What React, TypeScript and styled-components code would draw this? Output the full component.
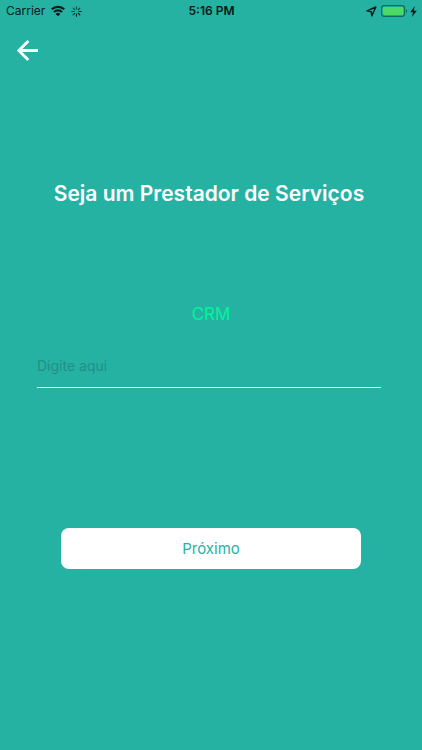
import React from "react";
import styled, { createGlobalStyle } from "styled-components";

const Global = createGlobalStyle`
  * { box-sizing: border-box; }
  body { margin: 0; background: #26b2a3; font-family: Inter, "Liberation Sans", sans-serif; }
`;
const Screen = styled.div`
  min-height: 100vh;
  display: flex;
  flex-direction: column;
`;
const StatusBar = styled.div`
  display: grid;
  grid-template-columns: 1fr auto 1fr;
  align-items: center;
  height: 22px;
  padding: 0 5px 0 6px;
  font-size: 12px;
  line-height: 20px;
  color: #041a17;
`;
const StatusGroup = styled.div<{ $end?: boolean }>`
  display: flex;
  align-items: center;
  gap: ${(p) => (p.$end ? 4 : 6)}px;
  justify-content: ${(p) => (p.$end ? "flex-end" : "flex-start")};
  svg { display: block; flex: none; }
`;
const PowerGroup = styled.div`
  display: flex;
  align-items: center;
  gap: 2px;
`;
const Clock = styled.time`
  font-weight: 600;
`;
const Header = styled.header`
  display: flex;
  padding: 16px;
`;
const BackButton = styled.button`
  display: flex;
  padding: 0;
  border: 0;
  background: none;
  color: #fff;
  cursor: pointer;
`;
const Form = styled.form`
  display: flex;
  flex-direction: column;
  padding: 102px 41px 0 37px;
`;
const Title = styled.h1`
  margin: 0;
  font-size: 21px;
  line-height: 28px;
  font-weight: 600;
  text-align: center;
  color: #fff;
  white-space: nowrap;
`;
const Label = styled.label`
  margin: 94px -4px 0 0;
  font-size: 17px;
  line-height: 24px;
  text-align: center;
  color: #00f59b;
`;
const Field = styled.input`
  width: 100%;
  height: 44px;
  margin-top: 18px;
  padding: 0;
  border: 0;
  border-bottom: 1px solid #e4f8f6;
  border-radius: 0;
  outline: 0;
  background: none;
  color: #fff;
  font: inherit;
  font-size: 14px;
  &::placeholder { color: #209084; opacity: 1; }
`;
const NextButton = styled.button`
  height: 41px;
  margin: 140px 20px 0 24px;
  border: 0;
  border-radius: 8px;
  background: #fff;
  color: #26b2a3;
  font: inherit;
  font-size: 15px;
  cursor: pointer;
`;

const WifiIcon = () => (
  <svg width="14" height="12" viewBox="0 0 14 12" fill="none" stroke="currentColor" strokeWidth="2.2" aria-hidden="true">
    <path d="M.8 4.300a8.900 8.900 0 0 1 12.400 0M3 7a5.600 5.600 0 0 1 8 0" />
    <path d="M4.600 8.900a3.300 3.300 0 0 1 4.800 0L7 11.300z" fill="currentColor" stroke="none" />
  </svg>
);

const spokes = [1, 1, 0.95, 0.85, 0.75, 0.7, 0.65, 0.8];
const SpinnerIcon = () => (
  <svg width="11" height="11" viewBox="0 0 11 11" stroke="currentColor" strokeWidth="1.2" strokeLinecap="round" aria-hidden="true">
    {spokes.map((opacity, i) => (
      <path key={i} d="M5.500 .8v2.200" opacity={opacity} transform={`rotate(${90 + i * 45} 5.5 5.5)`} />
    ))}
  </svg>
);

const LocationIcon = () => (
  <svg width="11" height="11" viewBox="0 0 11 11" fill="none" stroke="currentColor" strokeWidth="1.4" strokeLinejoin="round" aria-hidden="true">
    <path d="M9.800 1L1 4.900l4.200.700.600 4.300z" />
  </svg>
);

const BatteryIcon = () => (
  <svg width="27" height="12" viewBox="0 0 27 12" aria-hidden="true">
    <rect x=".6" y=".6" width="23" height="10.8" rx="2.6" fill="none" stroke="#0d6b60" strokeWidth="1.1" />
    <rect x="2" y="2" width="20.2" height="8" rx="1.4" fill="#4cd964" />
    <path d="M25 4.200c1.500.5 1.500 3.100 0 3.600z" fill="#0d6b60" />
  </svg>
);

const BoltIcon = () => (
  <svg width="7" height="11" viewBox="0 0 6 10" fill="currentColor" aria-hidden="true">
    <path d="M4.200 0L0 5.600h2.600L1.600 10 6 4.300H3.300z" />
  </svg>
);

export default function App() {
  return (
    <Screen>
      <Global />
      <StatusBar>
        <StatusGroup>
          <span>Carrier</span>
          <WifiIcon />
          <SpinnerIcon />
        </StatusGroup>
        <Clock>5:16 PM</Clock>
        <StatusGroup $end>
          <LocationIcon />
          <PowerGroup>
            <BatteryIcon />
            <BoltIcon />
          </PowerGroup>
        </StatusGroup>
      </StatusBar>
      <Header>
        <BackButton type="button" aria-label="Voltar">
          <svg width="24" height="24" viewBox="0 0 24 24" fill="none" stroke="currentColor" strokeWidth="2.8" aria-hidden="true">
            <path d="M22 12.500H3M12.300 3L2.800 12.500l9.500 9.500" />
          </svg>
        </BackButton>
      </Header>
      <Form onSubmit={(e) => e.preventDefault()}>
        <Title>Seja um Prestador de Serviços</Title>
        <Label htmlFor="crm">CRM</Label>
        <Field id="crm" placeholder="Digite aqui" />
        <NextButton type="submit">Próximo</NextButton>
      </Form>
    </Screen>
  );
}
